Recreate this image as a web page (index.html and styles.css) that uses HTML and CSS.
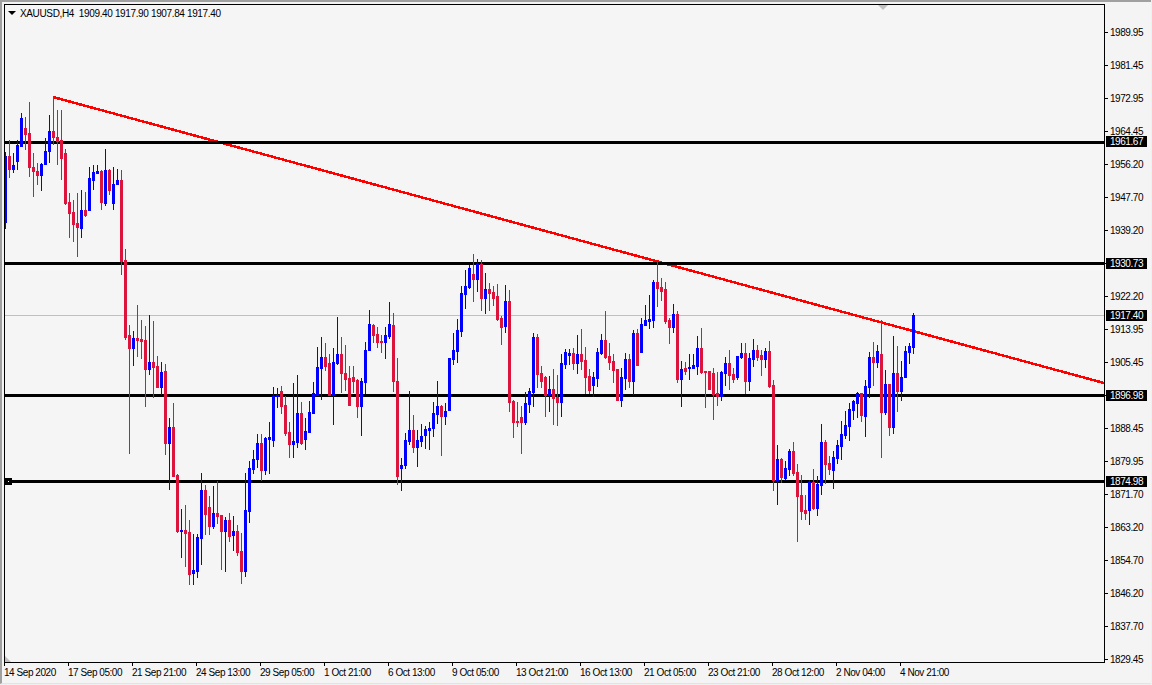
FILE: index.html
```html
<!DOCTYPE html>
<html lang="en">
<head>
<meta charset="utf-8">
<title>XAUUSD,H4</title>
<link rel="stylesheet" href="styles.css">
</head>
<body>
<main class="window">
  <div class="chart-row">
    <section class="plot" id="plot">
      <svg class="canvas" id="canvas" width="1099" height="657" viewBox="5 5 1099 657" shape-rendering="crispEdges" aria-hidden="true"></svg>
      <div class="legend"><span class="legend-arrow"></span><span>XAUUSD,H4&nbsp; 1909.40 1917.90 1907.84 1917.40</span></div>
      <span class="scroll-mark"></span>
      <span class="corner-mark"></span>
      <span class="anchor"></span>
    </section>
    <aside class="price-axis">
      <span class="tick">1989.95</span>
      <span class="tick">1981.45</span>
      <span class="tick">1972.95</span>
      <span class="tick">1964.45</span>
      <span class="tick">1956.20</span>
      <span class="tick">1947.70</span>
      <span class="tick">1939.20</span>
      <span class="tick">1930.70</span>
      <span class="tick">1922.20</span>
      <span class="tick">1913.95</span>
      <span class="tick">1905.45</span>
      <span class="tick">1896.95</span>
      <span class="tick">1888.45</span>
      <span class="tick">1879.95</span>
      <span class="tick">1871.70</span>
      <span class="tick">1863.20</span>
      <span class="tick">1854.70</span>
      <span class="tick">1846.20</span>
      <span class="tick">1837.70</span>
      <span class="tick">1829.45</span>
      <span class="tag tag-1">1961.67</span>
      <span class="tag tag-2">1930.73</span>
      <span class="tag tag-3">1917.40</span>
      <span class="tag tag-4">1896.98</span>
      <span class="tag tag-5">1874.98</span>
    </aside>
  </div>
  <footer class="time-axis">
    <span class="time">14 Sep 2020</span>
    <span class="time">17 Sep 05:00</span>
    <span class="time">21 Sep 21:00</span>
    <span class="time">24 Sep 13:00</span>
    <span class="time">29 Sep 05:00</span>
    <span class="time">1 Oct 21:00</span>
    <span class="time">6 Oct 13:00</span>
    <span class="time">9 Oct 05:00</span>
    <span class="time">13 Oct 21:00</span>
    <span class="time">16 Oct 13:00</span>
    <span class="time">21 Oct 05:00</span>
    <span class="time">23 Oct 21:00</span>
    <span class="time">28 Oct 12:00</span>
    <span class="time">2 Nov 04:00</span>
    <span class="time">4 Nov 21:00</span>
  </footer>
</main>
<script src="chart.js"></script>
</body>
</html>
```
FILE: styles.css
```css
* { box-sizing: border-box; }
html, body { margin: 0; padding: 0; }
body {
  width: 1152px;
  height: 685px;
  overflow: hidden;
  background: #f0f0f0;
  font-family: "Liberation Sans", Arial, sans-serif;
  font-size: 10px;
  letter-spacing: -0.45px;
  color: #000;
}
.window {
  width: 1151px;
  height: 684px;
  padding: 2px 0 0 2px;
  background: #f4f4f4;
  border-top: 2px solid #a0a0a0;
  border-left: 2px solid #a0a0a0;
  border-bottom: 1px solid #e4e4e4;
  display: flex;
  flex-direction: column;
}
.chart-row { display: flex; height: 659px; }
.plot {
  position: relative;
  width: 1101px;
  height: 659px;
  background: #f5f5f5;
  border: 1px solid #000;
  flex: none;
}
.canvas { display: block; }
.legend {
  position: absolute;
  left: 3px;
  top: 1px;
  display: flex;
  align-items: center;
  height: 14px;
  white-space: pre;
  font-size: 10px;
  letter-spacing: -0.36px;
  color: #000;
}
.legend-arrow {
  width: 0;
  height: 0;
  margin-right: 4px;
  border-left: 4px solid transparent;
  border-right: 4px solid transparent;
  border-top: 4px solid #000;
}
.scroll-mark {
  position: absolute;
  left: 873px;
  top: 0;
  width: 0;
  height: 0;
  border-left: 5px solid transparent;
  border-right: 5px solid transparent;
  border-top: 5px solid #c0c0c0;
}
.corner-mark {
  position: absolute;
  left: 0;
  bottom: 0;
  width: 0;
  height: 0;
  border-left: 6px solid #c0c0c0;
  border-top: 6px solid transparent;
}
.anchor {
  position: absolute;
  left: 0;
  top: 473px;
  width: 7px;
  height: 7px;
  background: radial-gradient(circle, #fff 0 0.9px, #000 0.9px);
}
.price-axis {
  position: relative;
  flex: 1;
  display: flex;
  flex-direction: column;
  padding-top: 23px;
}
.tick {
  height: 33px;
  line-height: 11px;
  padding-left: 5px;
  flex: none;
  position: relative;
}
.tick::before {
  content: "";
  position: absolute;
  left: 0;
  top: 5px;
  width: 3px;
  height: 1px;
  background: #000;
}
.tag {
  position: absolute;
  left: 1px;
  width: 41px;
  height: 11px;
  line-height: 11px;
  padding-left: 4px;
  background: #000;
  color: #fff;
}
.tag-1 { top: 132px; }
.tag-2 { top: 254px; }
.tag-3 { top: 306px; }
.tag-4 { top: 386px; }
.tag-5 { top: 472px; }
.time-axis {
  display: flex;
  height: 20px;
  padding-top: 4px;
}
.time {
  width: 64px;
  flex: none;
  line-height: 12px;
  position: relative;
  white-space: nowrap;
}
.time::before {
  content: "";
  position: absolute;
  left: 0;
  top: -4px;
  width: 1px;
  height: 3px;
  background: #000;
}
```
FILE: chart.js
```js
// Each candle: colour (b/r), wick top, body top, body bottom, wick bottom. Columns start at x=5, every 4px.
var DATA = "b152,156,222,228 r140,156,169,177 b153,165,169,172 b140,145,161,169 b113,118,146,146 r117,128,134,149 r102,133,167,176 r153,167,171,196 r163,171,175,184 b163,164,175,190 b138,151,164,164 b115,131,151,162 r97,131,137,144 r110,137,141,164 r110,140,158,179 r149,153,203,204 r193,202,213,237 r200,212,224,241 r193,223,227,256 b190,210,228,237 r192,210,215,216 b167,178,210,210 b165,172,180,189 b165,171,173,173 r170,171,202,209 b149,170,203,205 r169,170,190,194 b167,184,203,209 b169,180,184,184 r170,180,261,274 r249,260,337,339 " +
"r325,335,348,453 b331,338,348,365 r305,338,340,356 r320,339,341,358 r326,340,369,406 b315,362,369,374 r321,362,367,397 r356,366,387,387 b362,372,387,394 r364,371,443,454 b418,427,443,489 r403,427,476,476 r474,475,531,532 b509,530,531,557 r505,530,533,566 r520,532,574,584 b534,570,573,584 b534,537,571,577 b473,490,538,564 r485,490,514,534 r496,507,526,534 b486,513,526,528 r481,513,516,523 r515,515,531,569 b517,520,531,571 r513,520,536,541 b516,531,535,550 r525,531,552,555 r533,551,571,583 b473,510,571,576 b461,468,511,522 b450,459,469,473 b434,443,459,467 r434,443,470,480 b437,438,470,474 b422,437,439,473 b387,396,440,446 b388,395,396,407 r386,391,406,413 r396,405,433,435 r422,432,444,457 b383,441,444,457 b375,413,442,447 " +
"r402,413,443,444 b418,431,439,449 b401,412,432,432 b382,393,413,413 b347,367,395,395 b337,357,368,399 r343,357,366,370 r354,363,395,395 b348,362,395,424 b317,354,363,364 r337,354,373,392 r345,373,379,390 r366,378,405,405 r366,377,381,392 r379,380,406,417 b378,381,406,435 b342,350,382,393 b310,324,350,350 r324,325,335,342 r327,334,342,347 r335,341,342,352 b327,335,342,358 b302,324,336,338 r313,325,381,391 r358,381,476,484 b458,465,468,490 b433,440,465,468 b391,430,441,444 r415,430,447,452 b430,440,447,466 b424,436,441,446 b426,429,435,448 b422,428,430,449 b402,413,428,436 b381,406,414,423 r405,406,416,455 b403,411,416,424 b358,358,410,410 b333,350,359,364 b319,330,351,362 b286,293,331,336 b270,286,294,308 b265,268,287,288 r254,274,279,301 b259,264,279,291 r260,264,298,310 b273,289,298,313 r283,289,293,310 r286,292,298,305 r284,296,319,320 r316,318,327,344 b285,301,326,332 r290,301,402,411 r400,401,422,437 r402,421,422,426 r406,417,422,453 b392,403,422,424 b388,391,404,412 b333,337,392,406 r334,337,374,387 r366,373,381,387 r376,377,395,416 b376,389,395,411 r369,389,398,424 r375,397,402,425 b354,363,402,416 b349,352,364,368 b349,353,355,364 r348,353,363,369 b335,354,363,373 r329,354,361,369 " +
"r347,360,377,393 r369,376,390,393 b372,377,385,396 b348,352,378,386 b334,340,353,354 r311,340,357,358 r343,356,362,369 r354,361,370,382 r369,369,400,400 b368,377,400,406 b353,359,378,389 r354,359,381,387 b330,333,381,394 r329,333,365,365 b318,324,352,352 b305,320,325,325 b295,319,321,328 b280,282,320,327 r262,282,288,306 r278,287,291,300 r282,289,321,323 r318,320,327,343 b304,314,327,332 r311,314,379,382 b361,369,379,406 r362,368,371,374 b354,367,368,379 b354,365,368,368 b336,348,366,374 r328,348,372,373 r371,371,372,407 r371,371,389,389 r368,373,394,419 r372,393,396,405 b371,372,396,400 b357,363,373,385 r350,363,375,389 r368,374,379,382 b356,356,377,379 b343,353,357,358 r343,353,381,393 b353,358,381,390 b339,350,359,366 r345,350,357,360 " +
"r350,355,359,375 b348,351,359,367 r341,351,386,387 r380,385,480,490 b445,459,480,504 r458,459,477,482 b461,468,478,479 b449,451,469,475 r442,451,473,475 r464,472,496,541 r475,495,511,519 r495,510,513,519 b480,482,510,524 r469,482,508,509 b476,484,508,515 b424,442,485,494 r440,442,464,483 r456,463,469,474 b451,457,470,488 b440,445,458,463 b421,434,446,459 b411,425,435,438 b403,409,426,440 b400,401,410,419 b392,393,403,417 r393,393,415,421 b380,386,416,436 b352,357,387,397 r342,357,362,385 b345,351,362,367 r320,354,412,457 b370,384,412,414 r384,384,427,435 b336,373,427,433 r346,373,391,411 b361,377,391,400 b346,351,377,377 b343,346,352,363 b313,315,347,353";

var COLORS = { b: "#0000ff", r: "#dc143c" };
var NS = "http://www.w3.org/2000/svg";
var svg = document.getElementById("canvas");

function add(tag, attrs) {
  var el = document.createElementNS(NS, tag);
  for (var k in attrs) el.setAttribute(k, attrs[k]);
  svg.appendChild(el);
}

// Grey current-price line and trend line lie under the levels
add("rect", { x: 5, y: 315, width: 1099, height: 1, fill: "#c0c0c0" });
add("line", { x1: 53, y1: 97, x2: 1104, y2: 383, stroke: "#ff0000", "stroke-width": 2.5 });

// Horizontal levels
[141, 262, 394, 480].forEach(function (y) {
  add("rect", { x: 5, y: y, width: 1099, height: 3, fill: "#000" });
});

// Candles are drawn on top of the objects
DATA.split(" ").forEach(function (item, i) {
  var x = 5 + i * 4;
  var c = COLORS[item[0]];
  var v = item.slice(1).split(",").map(Number);
  add("rect", { x: x, y: v[0], width: 1, height: v[3] - v[0] + 1, fill: c });
  add("rect", { x: x - 1, y: v[1], width: 3, height: v[2] - v[1] + 1, fill: c });
});
```
